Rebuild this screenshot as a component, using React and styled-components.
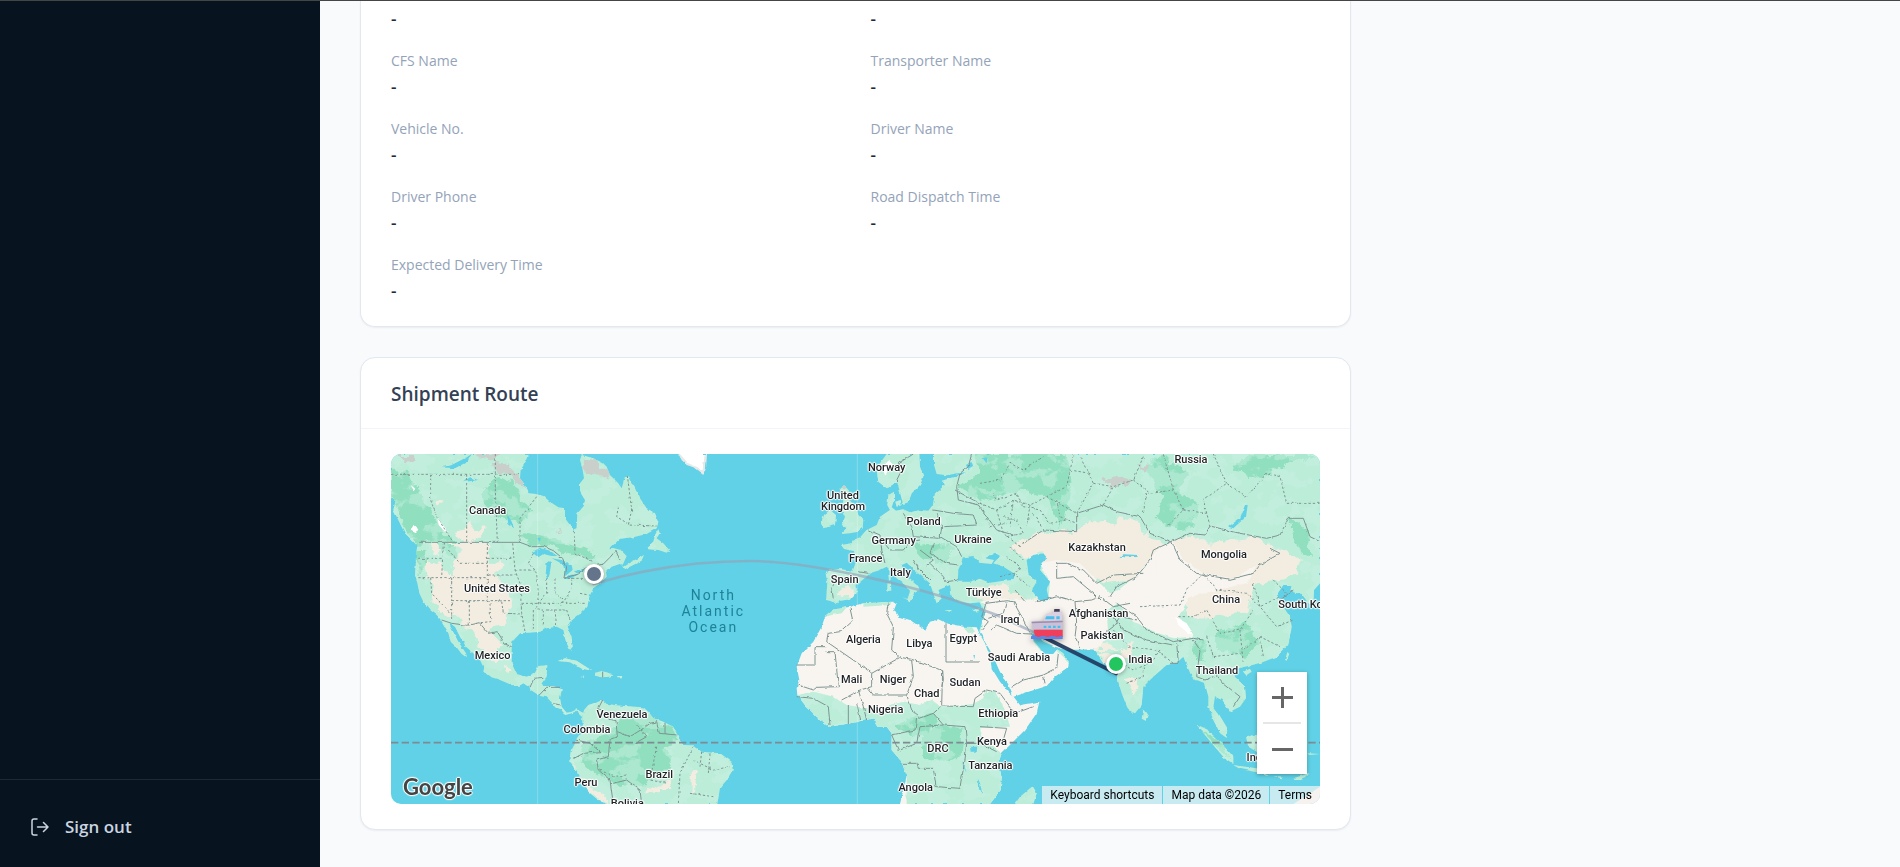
import React from 'react';
import styled, { createGlobalStyle } from 'styled-components';

const GlobalStyle = createGlobalStyle`
  * {
    box-sizing: border-box;
  }

  body {
    margin: 0;
    background: #f8fafc;
    font-family: 'Open Sans', 'Noto Sans', sans-serif;
    color: #334155;
  }
`;

const Shell = styled.div`
  display: flex;
  min-height: 100vh;
  border-top: 1px solid #454545;
`;

const Sidebar = styled.aside`
  display: flex;
  flex: 0 0 320px;
  flex-direction: column;
  justify-content: flex-end;
  background: #07131f;
`;

const SidebarFooter = styled.div`
  padding: 23px 20px 17px;
  border-top: 1px solid #1d2936;
`;

const SignOutButton = styled.button`
  display: flex;
  align-items: center;
  gap: 16px;
  width: 100%;
  padding: 10px 11px;
  border: 0;
  background: none;
  color: #cbd5e1;
  font: 600 17px/27px 'Open Sans', sans-serif;
  text-align: left;
  cursor: pointer;
`;

const Main = styled.main`
  display: grid;
  flex: 1;
  grid-template-columns: repeat(3, minmax(0, 1fr));
  column-gap: 27px;
  align-items: start;
  padding: 0 40px 36px;
`;

const Column = styled.div`
  display: flex;
  grid-column: span 2;
  flex-direction: column;
  gap: 30px;
`;

const Card = styled.section`
  border: 1px solid #e2e8f0;
  border-top-width: ${(p) => (p.$open ? 0 : '1px')};
  border-radius: ${(p) => (p.$open ? '0 0 15px 15px' : '15px')};
  background: #fff;
  box-shadow: 0 1px 2px rgba(15, 23, 42, 0.06);
`;

const CardHeader = styled.header`
  padding: 23px 30px 21px;
  border-bottom: 1px solid #f1f5f9;
`;

const CardTitle = styled.h2`
  margin: 0;
  font-size: 19px;
  font-weight: 600;
  line-height: 26px;
`;

const Details = styled.dl`
  display: grid;
  grid-template-columns: repeat(2, minmax(0, 1fr));
  gap: 20px 30px;
  margin: 0;
  padding: 7px 30px 24px;
`;

const Label = styled.dt`
  margin-bottom: 4px;
  color: #94a3b8;
  font-size: 14px;
  line-height: 22px;
`;

const Value = styled.dd`
  margin: 0;
  color: #1e293b;
  font-size: 17px;
  font-weight: 600;
  line-height: 22px;
`;

const MapPadding = styled.div`
  padding: 25px 30px;
`;

const MapFrame = styled.div`
  position: relative;
  height: 350px;
  overflow: hidden;
  border-radius: 10px;
  background: #60d1e6;
  font-family: Roboto, sans-serif;
`;

const World = styled.svg`
  display: block;
  width: 100%;
  height: 100%;
`;

// x and y are given in the units of the map's viewBox
const Pin = styled.span`
  position: absolute;
  top: ${(p) => (p.$y - 12) / 10.5}%;
  left: ${(p) => (p.$x - 33) / 27.87}%;
  transform: translate(-50%, -50%);
`;

const Place = styled(Pin)`
  color: #1f2225;
  font-size: 11px;
  font-weight: 500;
  line-height: 11px;
  text-align: center;
  text-shadow: 0 0 1px #fff, 1px 0 1px #fff, -1px 0 1px #fff, 0 1px 1px #fff, 0 -1px 1px #fff,
    0 0 2px #fff, 0 0 2px #fff;
  white-space: pre;
`;

const Ocean = styled(Pin)`
  color: #1f8299;
  font-size: 14px;
  letter-spacing: 2px;
  line-height: 16px;
  text-align: center;
  white-space: pre;
`;

const Dot = styled(Pin)`
  width: 20px;
  height: 20px;
  border: 3px solid #fff;
  border-radius: 50%;
  background: ${(p) => p.$color};
  box-shadow: 0 1px 4px rgba(0, 0, 0, 0.35);
`;

const ShipPin = styled(Pin)`
  display: flex;
  filter: drop-shadow(0 2px 3px rgba(0, 0, 0, 0.4));
`;

const Brand = styled.a`
  position: absolute;
  bottom: 3px;
  left: 12px;
  color: #444;
  font: 700 22px/28px Lato, sans-serif;
  text-decoration: none;
  text-shadow: 1px 0 1px #fff, -1px 0 1px #fff, 0 1px 1px #fff, 0 -1px 1px #fff, 0 0 2px #fff;
`;

const ZoomControl = styled.div`
  position: absolute;
  right: 13px;
  bottom: 30px;
  display: flex;
  flex-direction: column;
  align-items: center;
  width: 50px;
  background: #fff;
  box-shadow: 0 1px 4px rgba(0, 0, 0, 0.3);
`;

const ZoomButton = styled.button`
  display: flex;
  align-items: center;
  justify-content: center;
  width: 50px;
  height: 50px;
  padding: 0;
  border: 0;
  background: none;
  color: #666;
  cursor: pointer;
`;

const ZoomDivider = styled.div`
  width: 38px;
  height: 2px;
  background: #e6e6e6;
`;

const Attribution = styled.div`
  position: absolute;
  right: 0;
  bottom: 0;
  display: flex;
  gap: 1px;
  color: #000;
  font-size: 12px;
  line-height: 18px;
`;

const Credit = styled.span`
  padding: 0 8px;
  background: rgba(245, 245, 245, 0.7);
`;

const CreditButton = styled.button`
  padding: 0 8px;
  border: 0;
  background: rgba(245, 245, 245, 0.7);
  color: inherit;
  font: inherit;
  cursor: pointer;
`;

const CreditLink = styled.a`
  padding: 0 8px;
  background: rgba(245, 245, 245, 0.7);
  color: inherit;
  text-decoration: none;
`;

const details = [
  { value: '-' },
  { value: '-' },
  { label: 'CFS Name', value: '-' },
  { label: 'Transporter Name', value: '-' },
  { label: 'Vehicle No.', value: '-' },
  { label: 'Driver Name', value: '-' },
  { label: 'Driver Phone', value: '-' },
  { label: 'Road Dispatch Time', value: '-' },
  { label: 'Expected Delivery Time', value: '-' },
];

const places = [
  ['Canada', 323, 180],
  ['United States', 351, 415],
  ['Mexico', 338, 616],
  ['Venezuela', 726, 791],
  ['Colombia', 621, 838],
  ['Peru', 618, 997],
  ['Brazil', 838, 971],
  ['Bolivia', 742, 1058],
  ['Norway', 1520, 52],
  ['United\nKingdom', 1389, 153],
  ['Poland', 1631, 212],
  ['Germany', 1541, 270],
  ['Ukraine', 1779, 266],
  ['France', 1457, 325],
  ['Italy', 1561, 366],
  ['Spain', 1394, 388],
  ['Türkiye', 1811, 427],
  ['Algeria', 1450, 566],
  ['Libya', 1618, 579],
  ['Egypt', 1750, 563],
  ['Mali', 1415, 686],
  ['Niger', 1539, 686],
  ['Sudan', 1755, 695],
  ['Chad', 1640, 728],
  ['Nigeria', 1517, 776],
  ['Iraq', 1890, 507],
  ['Ethiopia', 1855, 788],
  ['Kenya', 1836, 873],
  ['DRC', 1674, 895],
  ['Tanzania', 1831, 946],
  ['Angola', 1607, 1012],
  ['Saudi Arabia', 1917, 620],
  ['Russia', 2433, 28],
  ['Kazakhstan', 2151, 291],
  ['Mongolia', 2532, 313],
  ['China', 2538, 447],
  ['South Korea', 2785, 463],
  ['Afghanistan', 2156, 489],
  ['Pakistan', 2166, 556],
  ['India', 2281, 628],
  ['Thailand', 2511, 661],
  ['Indonesia', 2672, 922],
];

// land outlines, one list for each third of the map
const americas = [
  'M33 12V140L47 152 40 180 50 200 62 225 75 250 95 270 112 288 108 310 107 350 105 375 112 400 118 430 130 455 150 480 170 495 183 510 195 530 205 550 212 575 232 595 245 612 262 625 258 610 245 590 232 570 222 550 210 528 208 518 225 530 240 560 258 590 280 610 300 630 312 655 310 665 330 680 360 690 395 705 418 707 430 700 448 712 452 720 480 738 500 742 520 762 525 772 545 780 555 795 575 790 590 785 605 800 612 790 590 778 575 785 560 788 545 770 540 745 545 718 520 708 490 708 485 700 500 680 502 645 475 648 465 668 440 680 410 672 395 640 395 600 397 575 420 550 445 548 480 545 500 535 530 530 550 540 558 575 570 600 578 590 575 560 563 530 570 515 600 492 622 470 628 440 640 415 660 400 680 380 678 366 690 352 725 340 730 350 745 340 775 325 792 315 785 332 760 345 735 358 728 345 740 318 722 300 700 294 690 295 720 266 760 262 800 252 830 235 835 215 825 190 800 175 780 145 765 115 745 75 735 80 725 115 715 100 690 75 680 50 670 40 640 25 605 15 600 30 608 60 612 85 600 100 600 125 615 150 610 170 592 190 590 230 583 243 570 225 555 205 555 175 535 172 510 155 490 138 465 132 445 130 440 110 420 85 422 60 440 30 447 12Z',
  'M835 238 839 250 830 265 850 280 868 300 860 308 835 300 805 298 803 290 820 275 825 255Z',
  'M606 802 612 780 625 765 650 757 668 750 680 762 730 768 790 772 805 785 820 805 850 815 880 830 900 870 910 885 940 886 965 905 1020 910 1055 935 1058 960 1040 990 1020 1015 1012 1062H680L655 1050 630 1030 610 1000 590 965 568 935 572 905 590 870 610 840Z',
  'M533 633 555 625 590 632 625 655 637 662 600 655 570 637Z',
  'M645 668 665 663 700 672 690 680 665 682 645 677Z',
  'M600 680 613 680 610 684ZM712 678 727 678 725 682 712 682Z',
];

const europe = [
  'M590 12 570 40 560 60 565 95 590 115 615 100 622 98 628 120 640 165 655 160 665 130 690 105 700 80 690 50 688 12Z',
  'M732 12 732 45 740 72 770 76 830 65 800 78 755 92 765 105 735 130 728 165 715 182 690 180 660 187 640 178 618 182 605 172 612 150 612 125 595 135 592 165 600 180 570 200 560 225 530 240 510 262 490 270 485 280 453 285 462 297 492 303 500 330 488 362 450 358 420 360 407 370 412 400 408 450 430 455 440 465 450 452 482 448 500 430 500 405 520 388 540 370 570 360 590 350 605 365 620 385 640 400 660 425 652 447 635 440 660 454 672 430 690 420 680 405 650 380 635 345 650 338 690 375 720 400 740 460 755 445 745 420 780 405 785 440 810 455 840 460 885 455 890 475 875 520 868 545 878 556 882 570 905 610 930 665 960 710H1000V12Z',
  'M448 120 462 105 480 125 478 150 500 175 505 195 520 210 518 235 505 245 480 250 455 252 470 235 455 225 465 200 455 180 460 150Z',
  'M402 195 420 180 438 195 435 225 400 235 395 215Z',
  'M592 400 603 398 604 425 592 425ZM595 375 602 375 602 390 597 392Z',
  'M845 483 870 474 865 484ZM760 480 785 480 783 485ZM616 155 632 150 635 165 620 170Z',
];

const africa =
  'M432 490 455 475 480 470 520 460 560 458 610 455 620 460 612 480 625 500 660 510 690 530 705 540 720 515 745 508 770 520 820 530 860 532 868 550 885 580 900 620 905 655 930 695 955 725 972 742 990 765 1048 755 1040 790 1005 840 965 880 935 910 925 940 935 980 932 1020 900 1062H630L640 1020 650 980 635 935 605 900 605 850 590 830 565 830 550 805 520 812 480 820 420 830 380 800 345 765 322 735 320 715 328 690 320 650 335 610 370 575 395 530 405 500Z';

const africaGreen =
  'M322 735 370 725 430 740 470 765 530 775 560 790 600 765 645 755 690 765 725 750 755 772 800 768 850 762 880 745 885 725 915 725 945 780 960 830 900 832 870 835 880 870 935 910 925 940 935 980 932 1020 900 1062H650L650 980 635 935 605 900 605 850 590 830 565 830 550 805 480 820 420 830 380 800 345 765Z';

const asia = [
  'M0 12V440L-62 455-40 500-62 540-48 560-25 610 0 665 25 700 37 742 75 728 140 708 165 680 205 650 207 635 190 610 172 598 160 612 130 612 120 595 103 575 92 548 110 556 130 575 165 590 200 600 280 598 290 612 310 640 340 650 350 680 365 730 385 780 405 790 425 765 430 710 460 680 500 645 530 638 550 620 575 680 590 690 615 700 625 740 625 770 640 810 660 850 680 864 682 835 655 790 640 770 645 740 665 750 690 785 720 770 738 745 735 710 705 680 700 660 735 650 780 640 830 620 865 585 875 530 870 500 850 470 845 455 830 435 850 405 875 405 870 425 905 432 925 460 940 465 942 420 960 400V12Z',
  'M430 778 445 800 437 812 425 806Z',
  'M588 822 620 838 660 875 700 920 700 942 670 920 635 880Z',
  'M700 945 770 955 810 975 770 967 720 957Z',
  'M738 862 775 850V908L745 890Z',
  'M732 664 750 656 755 665 740 675ZM855 630 862 606 868 612 860 632Z',
  'M820 978 850 980 845 985ZM880 985 925 970 915 982 890 990ZM940 868 955 875ZM925 910 960 912 930 915Z',
  'M45 1062 60 1040 98 1008 110 1030 100 1062Z',
];

const waters = [
  'M455 307 480 293 510 302 532 318 515 318 490 312 475 322Z',
  'M500 338 511 330 513 345 508 375 503 390 497 375Z',
  'M515 325 545 330 575 345 578 360 556 378 550 345 535 335Z',
  'M550 385 570 375 592 372 580 382 555 389ZM582 364 612 356 612 363 590 370Z',
  'M185 52 215 45 260 22 275 12 262 35 225 55ZM250 95 270 82 295 90 270 94ZM380 190 395 215 402 235 385 222ZM470 265 482 262 480 275Z',
  'M1733 395 1735 360 1750 322 1780 318 1800 338 1835 342 1842 330 1815 325 1845 308 1860 318 1840 340 1870 350 1905 372 1900 390 1870 392 1830 398 1800 386 1770 395Z',
  'M1940 330 1960 315 1990 310 2002 325 1985 338 1980 360 2010 395 2000 420 2008 450 1978 452 1955 420 1970 395 1945 370Z',
  'M2545 230 2580 205 2595 165 2603 165 2598 200 2560 235ZM2218 325 2230 313 2274 315 2272 321 2235 322ZM1860 365 1875 372 1872 390 1860 388Z',
  'M1758 45 1775 35 1780 50 1765 60ZM1808 25 1822 22 1820 40ZM1770 890 1792 890 1790 905 1772 905ZM1745 930 1755 955 1760 970 1750 950ZM1793 985 1800 1000 1807 1032 1798 1020ZM1780 615 1785 615 1783 628Z',
];

const sands = [
  'M200 278 322 280 325 320 320 345 360 335 378 350 345 370 360 395 395 455 385 490 382 520 352 530 330 540 345 550 372 588 350 590 360 625 340 645 330 615 300 590 285 560 262 530 235 520 248 500 215 500 210 520 195 490 165 460 148 420 152 390 135 365 145 335 165 345 180 330 190 360 230 375 220 340 245 300Z',
  'M258 277 230 262 222 245 250 240 270 215 285 240 312 235 300 262 285 277ZM150 290 170 280 190 300 170 315ZM365 655 385 648 393 665 378 672ZM160 155 185 150 180 165Z',
  'M568 925 590 960 605 990 640 1015 690 1045 690 1062 660 1055 610 1005ZM800 1020 850 1005 875 985 880 1020 840 1020 800 1030ZM935 965 950 960 945 1025 935 1030Z',
  'M1370 430 1390 410 1425 420 1420 445 1385 440ZM1785 420 1830 410 1890 400 1890 455 1790 445Z',
  'M1930 270 1990 245 2090 245 2135 215 2200 225 2215 205 2270 215 2300 260 2350 280 2360 320 2300 350 2260 390 2170 400 2060 350 1980 340 1990 310 1935 320 1885 290Z',
  'M2375 275 2430 255 2480 275 2560 270 2640 262 2700 300 2765 330 2750 370 2700 390 2630 400 2600 480 2500 505 2420 500Z',
  'M1860 430 1880 410 1920 440 1990 455 2000 560 2140 600 2230 600 2262 570 2250 620 2200 620 2150 605 2170 640 2200 650 2230 600ZM2240 690 2265 680 2275 720 2255 740Z',
];

const deserts = [
  'M1980 340 2030 330 2100 340 2160 400 2190 430 2215 420 2260 385 2300 340 2330 300 2360 285 2400 330 2460 370 2455 390 2430 440 2395 500 2430 535 2440 560 2380 565 2330 548 2260 515 2215 460 2180 480 2185 560 2150 598 2060 600 2025 590 1960 552 1952 548 1960 575 1990 612 2030 600 2065 635 2065 650 2025 680 2000 708 1897 742 1860 665 1835 610 1800 550 1820 470 1800 455 1860 445 1920 450 2005 450 2010 395Z',
  'M2330 290 2380 275 2410 330 2470 370 2560 385 2630 345 2600 400 2430 440 2330 400Z',
];

const groves = [
  'M33 60 80 70 120 120 160 200 215 270 235 340 200 310 150 275 110 285 60 210 33 130Z',
  'M107 300 140 300 150 340 110 370ZM430 250 520 265 600 290 650 310 630 330 560 310 500 285 440 280ZM340 80 400 95 420 150 460 180 430 220 350 200 300 140Z',
  'M600 880 690 850 715 800 800 785 880 830 895 870 850 890 880 920 860 970 800 1000 740 1010 700 1000 640 960 600 930Z',
  'M1790 12 1930 12 2060 12 2075 130 2040 240 2010 150 1920 120 1860 140 1800 160 1730 110 1800 70Z',
  'M2290 50 2340 20 2420 60 2400 140 2460 170 2440 230 2390 245 2330 200 2350 140ZM2560 60 2640 90 2700 50 2820 12H2640L2600 12ZM2720 200 2780 240 2800 330 2760 300Z',
  'M1620 850 1680 825 1750 835 1745 920 1690 935 1620 920ZM1540 830 1600 800 1660 790 1680 820 1600 860ZM2440 565 2480 570 2470 640 2440 610ZM1600 285 1680 280 1720 300 1700 340 1640 330Z',
  'M2500 550 2600 520 2640 580 2600 620 2520 600ZM2460 840 2520 875 2555 930 2520 900Z',
];

const rocks = [
  'M345 35 385 40 420 85 440 118 410 100 385 75 350 65ZM290 12H365L340 32 300 25ZM50 12 100 12 110 40 75 32ZM605 20 640 28 680 60 690 78 650 80 615 72Z',
  'M2170 90 2200 70 2250 85 2240 105 2195 110ZM2270 50 2300 40 2295 65ZM1378 110 1395 104 1388 122ZM510 235 550 245 540 250Z',
];

const borders = [
  'M118 277H420L455 290 492 290 520 302 548 325 557 350 552 385 592 372 615 355 670 342 690 322 707 302 720 330M185 510 215 520 262 526 298 518 325 550 352 545 375 582 395 590M450 712 462 685 490 682M478 735 500 712 540 712M520 760 540 765M668 665V682',
  'M668 750 655 775 690 808 708 812 712 860 690 868 685 920 650 930 655 960 690 990 700 1062M590 870 630 880 660 905 610 910 582 925M712 845 750 860 790 835 810 820 830 815 838 850 890 855M700 1000 740 990 780 1020 785 1062M855 818 855 852M770 825 800 860 765 880',
  'M1365 395 1355 415 1360 445M1435 365 1465 370M1465 240 1500 255 1505 300 1515 340M1505 270 1530 300 1570 300 1590 275 1620 270M1570 190 1595 230 1600 260M1600 260 1680 265 1685 230 1672 190M1660 180 1720 190 1780 195 1790 225 1690 230M1725 120 1780 150 1800 160M1620 300 1660 330 1640 345M1680 260 1730 290 1745 320M1660 280 1650 310 1700 340 1735 345M1650 340 1690 380 1700 395 1735 390M1548 95 1560 70 1555 40 1600 12M1775 12 1765 50 1740 70 1730 110 1735 150 1795 165 1850 240 1900 255M1600 330 1620 360 1650 390',
  'M1410 475 1418 510 1380 545 1345 550 1340 575 1470 665 1475 670 1560 622M1525 455 1520 490 1540 530 1535 600 1560 622 1595 628 1688 662 1690 690 1685 710M1698 520V636H1800M1340 590H1305V645H1250M1340 605H1365L1375 710 1310 712 1300 720 1255 705M1475 670 1475 710 1440 720 1385 750M1595 628 1600 680 1580 735 1480 735 1465 715M1688 662 1685 765M1580 735 1600 790 1620 805 1660 790 1685 768 1780 770 1785 745 1820 720M1435 720 1450 770 1460 810M1250 740 1300 745 1345 770 1350 825M1405 765V822M1430 760 1442 810M1610 805 1605 840 1535 855 1555 900M1660 790 1690 825 1620 830 1610 880 1560 900M1690 825 1755 830 1760 880 1755 930 1745 985M1565 940H1610L1615 955 1660 955 1668 1010 1740 1015 1745 985M1755 880 1800 880 1850 905M1800 830 1880 835 1870 870M1820 720 1860 730 1905 790 1960 770',
  'M1805 540 1825 515 1805 500 1818 460 1880 452 1870 490 1825 505M1830 540 1850 525 1910 550 1955 552M1880 452 1900 455 1925 500 1950 548M1895 712 1930 690 1990 675 1995 700M1990 675 2030 655 2035 610M1905 420 1935 455M1970 455 2035 440 2085 455 2090 520 2085 560 2100 600M2085 455 2135 450 2160 440 2200 470 2250 460M2160 560 2200 530 2220 500 2270 510',
  'M1930 280 1990 240 2090 245 2090 190 2170 165 2210 185 2280 200 2310 250 2375 275 2430 250 2475 255 2490 228 2580 250 2660 265 2700 255 2725 205 2770 205 2790 260 2820 275M2375 275 2400 330 2450 370 2550 388 2620 370 2640 345 2700 310 2670 295M2375 275 2320 300 2310 330 2270 380 2210 410 2190 440M2030 385V340L2060 340 2110 360 2150 400 2200 375 2290 370M2030 385 2080 380 2140 430 2160 450M2210 460 2270 500 2300 540 2380 575 2440 565 2470 570M2200 500 2230 540 2300 570 2380 585M2390 580 2395 640 2370 640M2440 570 2460 600 2450 680 2475 690 2500 680M2505 670 2530 700 2580 740 2560 770M2740 420 2700 450',
];

const provinces = [
  'M33 73H420M152 73V150L170 200 215 270M260 73V277M346 12V120L352 277M470 140 420 205V277M583 243 585 310 640 335M742 75 755 180 745 225 830 228M715 170 710 200 750 225M115 383H322M322 280V452M190 277 185 383M185 325H115M205 300 240 340H322M152 383 155 430 212 490M215 383V510M215 452H390M268 452V525M322 325H400M398 280 405 360 420 400 425 490 435 545M405 360H460M325 375H410M330 460 332 515 300 518M365 455 370 490 430 492M425 460H620M460 310 445 340 470 370 475 430M475 430 470 480H560M460 480V540M490 480V530M525 480 530 530M500 385V430L475 460M525 385V430L550 450M550 385H630M575 385V420L540 470M560 480 570 510M600 430 625 435',
  'M830 890 810 990 860 1000M940 890 900 970 895 1062M940 930 1000 960 1050 950M965 905 960 950M990 910 985 970M660 960 700 980 740 975M930 1030 1000 1040',
  'M1800 100 1860 90 1890 40 1930 60 1990 20M1800 160 1850 180 1900 150 1950 165 2000 140 2090 190M1850 180 1870 250 1920 290M1900 150 1890 230M2000 140 2060 110 2080 12M2090 190 2140 100 2100 20M2170 165 2200 110 2260 90 2290 20M2260 90 2310 130 2380 120 2410 180 2360 230M2380 120 2350 12M2490 228 2470 150 2540 100 2600 140 2660 70 2700 80 2720 160 2820 160M2540 100 2500 12M1950 165 1940 230M1810 180 1830 230 1880 220',
  'M1830 120 1850 150 1910 130 1930 170 1980 180 2010 220 2060 210M1870 200 1910 210 1930 250 1880 260M1890 290 1930 330M1880 320 1920 350 1900 380M1960 190 1990 240M2030 150 2040 200 2090 220M2070 60 2130 70M2140 100 2200 110M2300 130 2290 190M2410 180 2480 190M1860 380 1900 370 1950 410',
  'M2280 470 2400 465 2420 420 2470 370 2510 420 2600 430 2640 470 2700 440M2395 500 2440 500 2480 480 2520 550 2580 540 2620 480M2480 560 2500 620 2580 610 2640 560 2700 590M2620 400 2640 470 2690 530 2740 510M2580 540 2590 640M2640 560 2650 620M2680 390 2720 430M2200 540 2250 590 2330 600 2380 640M2220 640 2260 660 2310 640 2340 600M2240 700 2290 680 2290 650',
];

function SignOutIcon() {
  return (
    <svg width="18" height="18" viewBox="0 0 18 18" fill="none" stroke="currentColor" strokeWidth="1.5" strokeLinecap="round" strokeLinejoin="round" aria-hidden="true">
      <path d="M6 1H3a2 2 0 0 0-2 2v12a2 2 0 0 0 2 2h3" />
      <path d="M6.500 9H17M12.500 4.500 17 9l-4.500 4.500" />
    </svg>
  );
}

function Ship() {
  return (
    <svg width="32" height="30" viewBox="0 0 96 90" aria-hidden="true">
      <path d="M70 0H86V14H68Z" fill="#44405a" />
      <path d="M46 14 66 12V8H94V46H34Z" fill="#d9d0e2" />
      <path d="M46 22H70V31H42ZM76 22H86V31H76Z" fill="#44c0ee" />
      <path d="M0 38 30 36 95 34V62H8Z" fill="#cbc0d8" />
      <path d="M2 38 95 35V40L3 43Z" fill="#9a8ead" />
      <path d="M38 50H46V57H38ZM52 50H60V57H52ZM66 50H74V57H66ZM80 50H88V57H80Z" fill="#44c0ee" />
      <path d="M8 62H95V84H13Z" fill="#ee3f5c" />
      <path d="M0 82 10 79 22 84 36 80 50 84 64 80 78 84 95 80V90H0Z" fill="#5a86e8" />
    </svg>
  );
}

function WorldMap() {
  const shapes = (list, fill) => list.map((d) => <path key={d} d={d} fill={fill} />);

  return (
    <World viewBox="33 12 2787 1050" preserveAspectRatio="xMidYMid slice" aria-hidden="true">
      <defs>
        <clipPath id="land">
          {americas.map((d) => <path key={d} d={d} />)}
          {europe.map((d) => <path key={d} d={d} transform="translate(930 0)" />)}
          <path d={africaGreen} transform="translate(930 0)" />
          {asia.map((d) => <path key={d} d={d} transform="translate(1860 0)" />)}
        </clipPath>
        <filter id="forest" x="0" y="0" width="100%" height="100%">
          <feTurbulence type="fractalNoise" baseFrequency="0.014 0.018" numOctaves="5" seed="8" />
          <feColorMatrix values="0 0 0 0 .58  0 0 0 0 .88  0 0 0 0 .76  14 0 0 0 -7.2" />
        </filter>
        <filter id="rough" x="-5%" y="-5%" width="110%" height="110%">
          <feTurbulence type="fractalNoise" baseFrequency="0.03" numOctaves="3" seed="3" />
          <feDisplacementMap in="SourceGraphic" scale="34" xChannelSelector="R" yChannelSelector="G" />
        </filter>
        <filter id="coast" x="-2%" y="-2%" width="104%" height="104%">
          <feTurbulence type="fractalNoise" baseFrequency="0.06" numOctaves="2" seed="5" />
          <feDisplacementMap in="SourceGraphic" scale="9" xChannelSelector="R" yChannelSelector="G" />
        </filter>
      </defs>

      <g filter="url(#coast)">
        <g>{shapes(americas, '#bcedd9')}</g>
        <g transform="translate(930 0)">
          {shapes(europe, '#bcedd9')}
          <path d={africa} fill="#f8f4ef" />
          <path d={africaGreen} fill="#bcedd9" />
          <path d="M405 500 432 478 470 472 455 490 425 495ZM520 460 605 455 600 465 520 470ZM820 532 845 530 855 545 835 550Z" fill="#bcedd9" />
        </g>
        <g transform="translate(1860 0)">{shapes(asia, '#bcedd9')}</g>
        <path d="M2740 1062 2790 1030 2820 1010V1062Z" fill="#f3ece0" />
        <g clipPath="url(#land)">
          <g filter="url(#rough)">{shapes(groves, '#90dfbf')}</g>
          <rect x="33" y="12" width="2787" height="1050" filter="url(#forest)" opacity=".5" />
          <g filter="url(#rough)">
            {shapes(sands, '#f3ece0')}
            {shapes(rocks, '#c9cfca')}
          </g>
          {shapes(deserts, '#f8f4ef')}
          <path d="M100 225 115 238 108 250 92 242ZM172 205 188 225 205 245 195 245 176 225ZM92 105 106 116 102 122ZM2385 500 2420 520 2440 555 2425 550 2395 525ZM1505 50 1525 30 1540 45 1515 75Z" fill="#fff" />
        </g>
        <path d="M895 12 905 30 920 45 940 52 970 75 978 55 981 12Z" fill="#e8eaea" />
        <path d="M900 12 925 40 950 50 968 60 974 12Z" fill="#fff" />
        {shapes(waters, '#60d1e6')}
      </g>

      <g fill="none" stroke="#7d9492" strokeWidth="3" strokeLinejoin="round" filter="url(#coast)">
        {borders.map((d) => <path key={d} d={d} />)}
        <g strokeDasharray="7 6">
          {provinces.map((d) => <path key={d} d={d} />)}
        </g>
      </g>

      <path d="M473 12V1062M1432 12V1062" stroke="#fff" strokeOpacity=".25" strokeWidth="3" />
      <path d="M33 878H2820" stroke="#7f8a92" strokeWidth="5" strokeDasharray="22 10" />

      <g fill="none" strokeLinecap="round">
        <path d="M641 402C800 355 950 333 1110 333S1600 400 1850 495L1990 560" stroke="#94a3b8" strokeOpacity=".65" strokeWidth="8" />
        <path d="M1992 562 2208 670" stroke="#1e3a5f" strokeOpacity=".92" strokeWidth="12" />
      </g>
    </World>
  );
}

function RouteMap() {
  return (
    <MapFrame>
      <WorldMap />
      {places.map(([name, x, y]) => <Place key={name} $x={x} $y={y}>{name}</Place>)}
      <Ocean $x={1000} $y={483}>{'North\nAtlantic\nOcean'}</Ocean>
      <Dot $x={641} $y={372} $color="#64748b" />
      <Dot $x={2208} $y={641} $color="#22c55e" />
      <ShipPin $x={2000} $y={523}><Ship /></ShipPin>
      <Brand href="#google">Google</Brand>
      <ZoomControl>
        <ZoomButton type="button" aria-label="Zoom in">
          <svg width="21" height="21" viewBox="0 0 21 21" stroke="currentColor" strokeWidth="3">
            <path d="M0 10.500H21M10.500 0V21" />
          </svg>
        </ZoomButton>
        <ZoomDivider />
        <ZoomButton type="button" aria-label="Zoom out">
          <svg width="21" height="21" viewBox="0 0 21 21" stroke="currentColor" strokeWidth="3">
            <path d="M0 10.500H21" />
          </svg>
        </ZoomButton>
      </ZoomControl>
      <Attribution>
        <CreditButton type="button">Keyboard shortcuts</CreditButton>
        <Credit>Map data ©2026</Credit>
        <CreditLink href="#terms">Terms</CreditLink>
      </Attribution>
    </MapFrame>
  );
}

function App() {
  return (
    <>
      <GlobalStyle />
      <Shell>
        <Sidebar>
          <SidebarFooter>
            <SignOutButton type="button">
              <SignOutIcon />
              Sign out
            </SignOutButton>
          </SidebarFooter>
        </Sidebar>
        <Main>
          <Column>
            <Card $open>
              <Details>
                {details.map(({ label, value }, i) => (
                  <div key={i}>
                    {label && <Label>{label}</Label>}
                    <Value>{value}</Value>
                  </div>
                ))}
              </Details>
            </Card>
            <Card>
              <CardHeader>
                <CardTitle>Shipment Route</CardTitle>
              </CardHeader>
              <MapPadding>
                <RouteMap />
              </MapPadding>
            </Card>
          </Column>
        </Main>
      </Shell>
    </>
  );
}

export default App;
